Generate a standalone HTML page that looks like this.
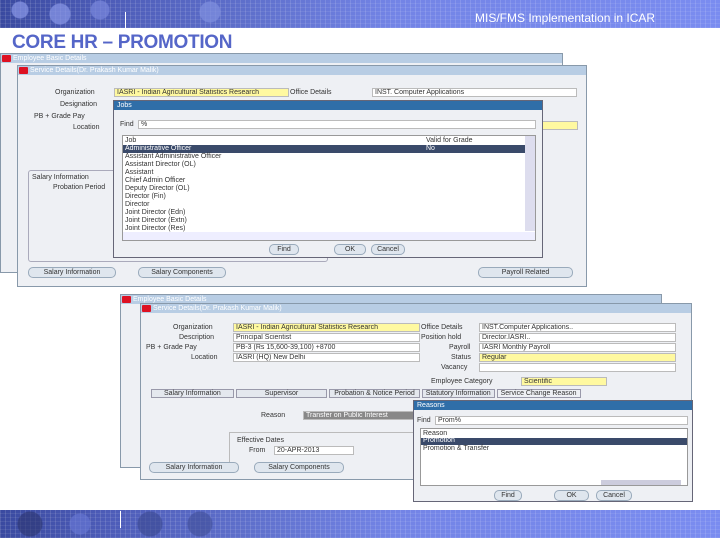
<!DOCTYPE html><html><head><meta charset="utf-8"><style>
*{margin:0;padding:0;box-sizing:border-box}
body{width:720px;height:540px;background:#fff;position:relative;overflow:hidden;font-family:"Liberation Sans",sans-serif}
.a{position:absolute}
.band{background-image:repeating-linear-gradient(90deg,rgba(255,255,255,.12) 0 1px,transparent 1px 5px),repeating-linear-gradient(0deg,rgba(255,255,255,.08) 0 1px,transparent 1px 4px),linear-gradient(90deg,#3a4aa0 0,#4d5cb8 15%,#5f70cc 35%,#7384e6 55%,#7a8cf0 100%)}
.win{background:#eef0f4;border:1px solid #8899aa}
.tb{background:#b8cde4;height:9px;font-size:7px;color:#fff;padding-left:12px;line-height:9px}
.ico{position:absolute;left:1px;top:1px;width:9px;height:7px;background:#d12;border-radius:1px}
.t{position:absolute;font-size:7px;color:#333;white-space:nowrap;line-height:8px}
.f{position:absolute;background:#fff;border:1px solid #bbb;height:9px;font-size:7px;line-height:8px;padding-left:2px;color:#333;white-space:nowrap;overflow:hidden}
.y{background:#fff9a0}
.btn{position:absolute;border:1px solid #9ab;border-radius:5px;background:#dfe6ee;font-size:7px;text-align:center;line-height:9px;height:11px;color:#333}
.lov{background:#fff;border:1px solid #667}
.lt{background:#2f6ea8;height:9px;color:#fff;font-size:7px;padding-left:3px;line-height:9px}
.sel{background:#3a4a6a;color:#fff}
</style></head><body>
<div class="a band" style="left:0;top:0;width:720px;height:28px"></div>
<div class="a" style="left:0;top:0;width:330px;height:28px;opacity:.7;background:radial-gradient(circle at 20px 10px,#8a98e8 8px,transparent 9px),radial-gradient(circle at 60px 14px,#8a98e8 10px,transparent 11px),radial-gradient(circle at 100px 10px,#7a88dd 9px,transparent 10px),radial-gradient(circle at 210px 12px,#8090e0 10px,transparent 11px)"></div>
<div class="a" style="left:125px;top:12px;width:1px;height:16px;background:#fff"></div>
<div class="a" style="left:475px;top:11px;font-size:12px;color:#fff">MIS/FMS Implementation in ICAR</div>
<div class="a" style="left:12px;top:32px;font-size:19px;font-weight:bold;color:#5566c8;letter-spacing:-.3px">CORE HR – PROMOTION</div>

<!-- screen 1 -->
<div class="a win" style="left:0;top:53px;width:563px;height:220px"><div class="tb"><div class="ico"></div>Employee Basic Details</div></div>
<div class="a win" style="left:17px;top:65px;width:570px;height:222px">
<div class="tb"><div class="ico"></div>Service Details(Dr. Prakash Kumar Malik)</div>
<div class="t" style="left:37px;top:23px">Organization</div>
<div class="f y" style="left:96px;top:22px;width:175px">IASRI - Indian Agricultural Statistics Research</div>
<div class="t" style="left:272px;top:23px">Office Details</div>
<div class="f" style="left:354px;top:22px;width:205px">INST. Computer Applications</div>
<div class="t" style="left:42px;top:35px">Designation</div>
<div class="t" style="left:16px;top:47px">PB + Grade Pay</div>
<div class="t" style="left:55px;top:58px">Location</div>
<div class="f y" style="left:520px;top:55px;width:40px"></div>
<div class="a" style="left:10px;top:104px;width:300px;height:92px;border:1px solid #aab;border-radius:3px"></div>
<div class="t" style="left:14px;top:108px">Salary Information</div>
<div class="t" style="left:35px;top:118px">Probation Period</div>
<div class="btn" style="left:10px;top:201px;width:88px">Salary Information</div>
<div class="btn" style="left:120px;top:201px;width:88px">Salary Components</div>
<div class="btn" style="left:460px;top:201px;width:95px">Payroll Related</div>
</div>
<div class="a lov" style="left:113px;top:100px;width:430px;height:158px;background:#eef0f4">
<div class="lt">Jobs</div>
<div class="t" style="left:6px;top:20px">Find</div>
<div class="f" style="left:24px;top:19px;width:398px">%</div>
<div class="a" style="left:8px;top:34px;width:414px;height:106px;background:#fff;border:1px solid #999">
<div class="t" style="left:2px;top:1px">Job</div><div class="t" style="left:303px;top:1px">Valid for Grade</div>
<div class="a sel" style="left:0;top:9px;width:402px;height:8px"></div>
<div class="t" style="left:2px;top:9px;color:#fff">Administrative Officer</div><div class="t" style="left:303px;top:9px;color:#fff">No</div>
<div class="t" style="left:2px;top:17px">Assistant Administrative Officer</div>
<div class="t" style="left:2px;top:25px">Assistant Director (OL)</div>
<div class="t" style="left:2px;top:33px">Assistant</div>
<div class="t" style="left:2px;top:41px">Chief Admin Officer</div>
<div class="t" style="left:2px;top:49px">Deputy Director (OL)</div>
<div class="t" style="left:2px;top:57px">Director (Fin)</div>
<div class="t" style="left:2px;top:65px">Director</div>
<div class="t" style="left:2px;top:73px">Joint Director (Edn)</div>
<div class="t" style="left:2px;top:81px">Joint Director (Extn)</div>
<div class="t" style="left:2px;top:89px">Joint Director (Res)</div>
<div class="a" style="right:0;top:0;width:10px;height:95px;background:#dde"></div>
<div class="a" style="left:0;bottom:0;width:412px;height:8px;background:#eef"></div>
</div>
<div class="btn" style="left:155px;top:143px;width:30px">Find</div>
<div class="btn" style="left:220px;top:143px;width:32px">OK</div>
<div class="btn" style="left:257px;top:143px;width:34px">Cancel</div>
</div>

<!-- screen 2 -->
<div class="a win" style="left:120px;top:294px;width:542px;height:174px"><div class="tb"><div class="ico"></div>Employee Basic Details</div></div>
<div class="a win" style="left:140px;top:303px;width:552px;height:177px">
<div class="tb"><div class="ico"></div>Service Details(Dr. Prakash Kumar Malik)</div>
<div class="t" style="left:32px;top:20px">Organization</div>
<div class="f y" style="left:92px;top:19px;width:187px">IASRI - Indian Agricultural Statistics Research</div>
<div class="t" style="left:38px;top:30px">Description</div>
<div class="f" style="left:92px;top:29px;width:187px">Principal Scientist</div>
<div class="t" style="left:5px;top:40px">PB + Grade Pay</div>
<div class="f" style="left:92px;top:39px;width:187px">PB-3 (Rs 15,600-39,100) +8700</div>
<div class="t" style="left:50px;top:50px">Location</div>
<div class="f" style="left:92px;top:49px;width:187px">IASRI (HQ) New Delhi</div>
<div class="t" style="left:280px;top:20px">Office Details</div>
<div class="f" style="left:338px;top:19px;width:197px">INST.Computer Applications..</div>
<div class="t" style="left:280px;top:30px">Position hold</div>
<div class="f" style="left:338px;top:29px;width:197px">Director.IASRI..</div>
<div class="t" style="left:308px;top:40px">Payroll</div>
<div class="f" style="left:338px;top:39px;width:197px">IASRI Monthly Payroll</div>
<div class="t" style="left:310px;top:50px">Status</div>
<div class="f y" style="left:338px;top:49px;width:197px">Regular</div>
<div class="t" style="left:300px;top:60px">Vacancy</div>
<div class="f" style="left:338px;top:59px;width:197px"></div>
<div class="t" style="left:290px;top:74px">Employee Category</div>
<div class="f y" style="left:380px;top:73px;width:86px">Scientific</div>
<div class="a" style="left:10px;top:86px;width:530px;height:10px;font-size:7px;color:#333;white-space:nowrap">
<span style="border:1px solid #99a;padding:0 12px;background:#e4e8ee">Salary Information</span> <span style="border:1px solid #99a;padding:0 28px;background:#e4e8ee">Supervisor</span> <span style="border:1px solid #99a;padding:0 4px;background:#e4e8ee">Probation &amp; Notice Period</span> <span style="border:1px solid #99a;padding:0 3px;background:#e4e8ee">Statutory Information</span> <span style="border:1px solid #99a;padding:0 3px">Service Change Reason</span></div>
<div class="t" style="left:120px;top:108px">Reason</div>
<div class="f" style="left:162px;top:107px;width:120px;background:#888;color:#fff">Transfer on Public Interest</div>
<div class="a" style="left:88px;top:128px;width:200px;height:36px;border:1px solid #bbb;border-right:none;border-bottom:none"></div>
<div class="t" style="left:96px;top:133px">Effective Dates</div>
<div class="t" style="left:108px;top:143px">From</div>
<div class="f" style="left:133px;top:142px;width:80px">20-APR-2013</div>
<div class="btn" style="left:8px;top:158px;width:90px">Salary Information</div>
<div class="btn" style="left:113px;top:158px;width:90px">Salary Components</div>
</div>
<div class="a lov" style="left:413px;top:400px;width:280px;height:102px;background:#eef0f4">
<div class="lt">Reasons</div>
<div class="t" style="left:3px;top:16px">Find</div>
<div class="f" style="left:21px;top:15px;width:253px">Prom%</div>
<div class="a" style="left:6px;top:27px;width:268px;height:58px;background:#fff;border:1px solid #999">
<div class="t" style="left:2px;top:1px">Reason</div>
<div class="a sel" style="left:0;top:9px;width:266px;height:7px"></div>
<div class="t" style="left:2px;top:8px;color:#fff">Promotion</div>
<div class="t" style="left:2px;top:16px">Promotion &amp; Transfer</div>
<div class="a" style="left:180px;bottom:0;width:80px;height:5px;background:#ccd"></div>
</div>
<div class="btn" style="left:80px;top:89px;width:28px">Find</div>
<div class="btn" style="left:140px;top:89px;width:35px">OK</div>
<div class="btn" style="left:182px;top:89px;width:36px">Cancel</div>
</div>

<div class="a band" style="left:0;top:510px;width:720px;height:28px"></div>
<div class="a" style="left:0;top:510px;width:300px;height:28px;opacity:.6;background:radial-gradient(circle at 30px 14px,#2c3570 12px,transparent 13px),radial-gradient(circle at 80px 14px,#6a7ad8 10px,transparent 11px),radial-gradient(circle at 150px 14px,#3a4890 12px,transparent 13px),radial-gradient(circle at 200px 14px,#404e98 12px,transparent 13px)"></div>
<div class="a" style="left:120px;top:511px;width:1px;height:17px;background:#fff"></div>
</body></html>
